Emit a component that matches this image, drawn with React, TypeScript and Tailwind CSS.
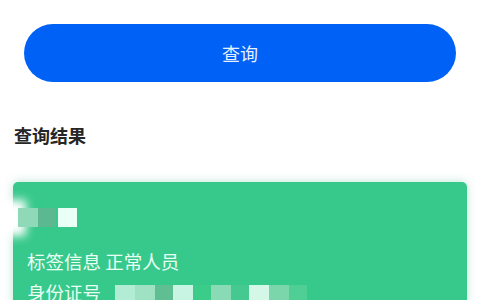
export default function App() {
  const font = { fontFamily: '"Noto Sans CJK SC", "Noto Sans", sans-serif' };
  const idBlocks = [
    "bg-[#b3ecd5]",
    "bg-[#9fe2c3]",
    "bg-[#5fbf92]",
    "bg-[#c8f5e3]",
    "bg-[#3ccc8a]",
    "bg-[#88dbb5]",
    "bg-[#45c990]",
    "bg-[#d4f7e8]",
    "bg-[#7cd6ac]",
    "bg-[#4fcf94]",
  ];

  return (
    <div className="w-[480px] h-[300px] overflow-hidden bg-white" style={font}>
      {/* Query button */}
      <div className="px-[24px] pt-[24px]">
        <button className="w-full h-[58px] rounded-full bg-[#0061f6] text-[18px] text-[#e8f0ff] leading-none">
          查询
        </button>
      </div>

      {/* Result title */}
      <div className="px-[14px] pt-[41px]">
        <h2 className="text-[18px] leading-[24px] font-bold text-[#262626]">查询结果</h2>
      </div>

      {/* Result card */}
      <div className="px-[13px] pt-[35px]">
        <div className="relative h-[200px] rounded-[5px] bg-[#37c98b] shadow-[0_0_10px_rgba(60,180,130,0.35)] pl-[14px] pt-[26px]">
          <div className="absolute left-[-13px] top-[18px] w-[26px] h-[36px] bg-white blur-[5px]" />
          {/* Name (mosaic) */}
          <div className="relative flex h-[19px] ml-[-9px]">
            <div className="w-[20px] bg-[#8fd8b8]" />
            <div className="w-[18px] bg-[#5cb890]" />
            <div className="w-[2px]" />
            <div className="w-[19px] bg-[#eafff5]" />
          </div>

          <div className="mt-[22px] text-[18.5px] leading-[24px] text-[#eafff4]">标签信息 正常人员</div>

          <div className="mt-[7px] flex items-center text-[18.5px] leading-[24px] text-[#eafff4]">
            <span>身份证号</span>
            <div className="ml-[14px] mt-[4px] flex h-[18px]">
              {idBlocks.map((c, i) => (
                <div key={i} className={`${c} ${i === 2 || i === 4 || i === 6 || i === 9 ? "w-[18px]" : "w-[20px]"}`} />
              ))}
            </div>
          </div>
        </div>
      </div>
    </div>
  );
}
